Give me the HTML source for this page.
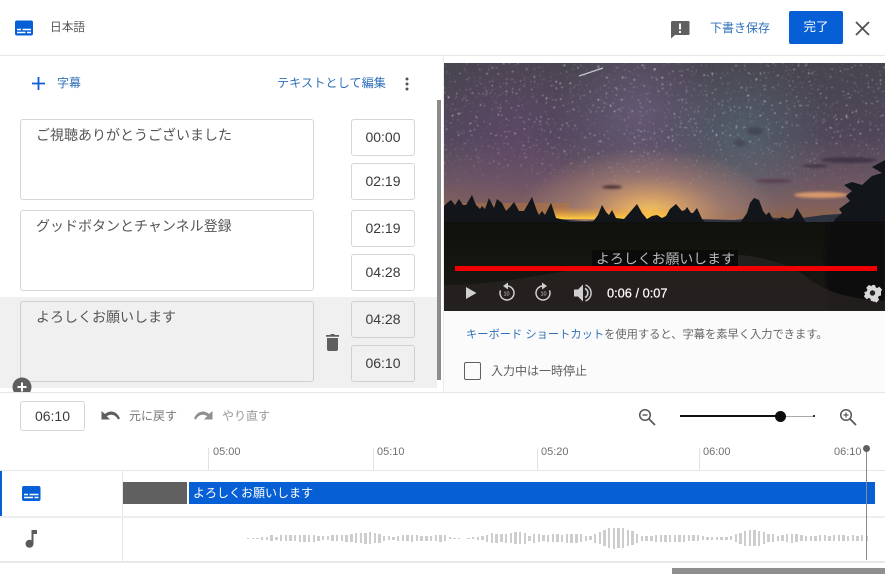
<!DOCTYPE html>
<html lang="ja"><head><meta charset="utf-8"><title>字幕</title>
<style>
*{box-sizing:border-box}
html,body{margin:0;padding:0;background:#fff}
body{width:885px;height:581px;position:relative;overflow:hidden;font-family:"Liberation Sans","Noto Sans CJK JP",sans-serif;color:#606060;filter:blur(.3px)}
.a{position:absolute}
.t{position:absolute;white-space:nowrap;line-height:16px;font-size:12px}
.blue{color:#2f70ba}
.box{position:absolute;border:1px solid #d6d6d6;border-radius:3px;background:#fff}
.sel{background:#f0f0f0;border-color:#d0d0d0}
.time{position:absolute;left:351px;width:64px;height:37px;border:1px solid #d6d6d6;border-radius:3px;background:#fff;text-align:center;font-size:14px;line-height:35px;color:#3a3a3a}
.time.sel{background:#f0f0f0;border-color:#d0d0d0}
.sub{position:absolute;left:36px;font-size:14px;line-height:20px;color:#555;white-space:nowrap}
.hl{position:absolute;height:1px;background:#e6e6e6}
svg{position:absolute;display:block}
.wave{position:absolute;left:247px;top:518px;height:40px;display:flex;align-items:center}
.wave i{display:block;width:2.4px;margin-right:2.3px;background:#cdcdcd;flex:none}
.tick{position:absolute;top:448px;width:1px;height:22px;background:#e2e2e2}
.rl{position:absolute;top:445px;font-size:11px;line-height:15px;color:#707070}
</style></head><body>

<!-- header -->
<svg style="left:14px;top:20px" width="20" height="16" viewBox="0 0 20 16"><rect x="1" y="0.500" width="18" height="15" rx="2" fill="#065fd4"/><path d="M3 9.500h4M8.500 9.500h8.500M3 12.500h8.500M13 12.500h4" stroke="#fff" stroke-width="1.500"/></svg>
<div class="t" style="left:50px;top:20px;color:#555;font-size:11.700px">日本語</div>
<div class="hl" style="left:0;top:55px;width:885px;background:#e8e8e8"></div>
<svg style="left:670px;top:20px" width="20" height="19" viewBox="0 0 20 19"><path d="M2.500 1h16a1 1 0 0 1 1 1v12a1 1 0 0 1-1 1H5l-4 3.500V2a1.500 1.500 0 0 1 1.500-1z" fill="#606060"/><path d="M10 3.500v6M10 11v2" stroke="#fff" stroke-width="2"/></svg>
<div class="t blue" style="left:710px;top:20px">下書き保存</div>
<div class="a" style="left:789px;top:11px;width:54px;height:33px;background:#065fd4;border-radius:2px;color:#fff;font-size:12.500px;line-height:33px;text-align:center">完了</div>
<svg style="left:855px;top:21px" width="15" height="15" viewBox="0 0 15 15"><path d="M1 1l13 13M14 1L1 14" stroke="#505050" stroke-width="1.800"/></svg>

<!-- left panel -->
<svg style="left:32px;top:77px" width="13" height="13" viewBox="0 0 13 13"><path d="M6.500 0v13M0 6.500h13" stroke="#065fd4" stroke-width="1.800"/></svg>
<div class="t blue" style="left:57px;top:75px">字幕</div>
<div class="t blue" style="left:277px;top:75px;font-size:12.200px">テキストとして編集</div>
<svg style="left:404px;top:77px" width="6" height="14" viewBox="0 0 6 14"><circle cx="3" cy="2" r="1.500" fill="#555"/><circle cx="3" cy="7" r="1.500" fill="#555"/><circle cx="3" cy="12" r="1.500" fill="#555"/></svg>

<div class="box" style="left:20px;top:119px;width:294px;height:81px"></div>
<div class="sub" style="top:125px">ご視聴ありがとうございました</div>
<div class="time" style="top:119px">00:00</div>
<div class="time" style="top:163px">02:19</div>

<div class="box" style="left:20px;top:210px;width:294px;height:81px"></div>
<div class="sub" style="top:216px">グッドボタンとチャンネル登録</div>
<div class="time" style="top:210px">02:19</div>
<div class="time" style="top:254px">04:28</div>

<div class="a" style="left:0;top:297px;width:437px;height:91px;background:#f0f0f0"></div>
<div class="box sel" style="left:20px;top:301px;width:294px;height:81px"></div>
<div class="sub" style="top:307px">よろしくお願いします</div>
<svg style="left:325px;top:333px" width="15" height="18" viewBox="0 0 15 18"><path d="M2 5h11v11a2 2 0 0 1-2 2H4a2 2 0 0 1-2-2zM1 2h4l1-1h3l1 1h4v1.800H1z" fill="#5f5f5f"/></svg>
<div class="time sel" style="top:301px">04:28</div>
<div class="time sel" style="top:345px">06:10</div>
<div class="a" style="left:437px;top:100px;width:4px;height:280px;background:#8c8c8c"></div>

<svg style="left:12px;top:377px" width="20" height="15" viewBox="0 0 20 15"><circle cx="10" cy="10" r="9.500" fill="#5f5f5f"/><path d="M10 5.500v9M5.500 10h9" stroke="#fff" stroke-width="2"/></svg>
<div class="hl" style="left:0;top:392px;width:885px"></div>

<!-- video -->
<svg style="left:444px;top:63px" width="441" height="248" viewBox="0 0 441 248">
<defs>
<linearGradient id="sky" x1="0" y1="0" x2="0" y2="1"><stop offset="0" stop-color="#48444f"/><stop offset=".45" stop-color="#4f4759"/><stop offset=".7" stop-color="#6a5562"/><stop offset=".86" stop-color="#80605f"/><stop offset=".96" stop-color="#8f6444"/></linearGradient>
<radialGradient id="glow" cx="205" cy="150" r="130" gradientUnits="userSpaceOnUse" gradientTransform="translate(0 75) scale(1 .5)"><stop offset="0" stop-color="#f7c860"/><stop offset=".25" stop-color="#dca468" stop-opacity=".9"/><stop offset=".6" stop-color="#b58a78" stop-opacity=".5"/><stop offset="1" stop-color="#b58a78" stop-opacity="0"/></radialGradient>
<radialGradient id="mw" cx="195" cy="50" r="85" gradientUnits="userSpaceOnUse"><stop offset="0" stop-color="#7a6a92" stop-opacity=".5"/><stop offset="1" stop-color="#7a6a92" stop-opacity="0"/></radialGradient>
<radialGradient id="teal" cx="300" cy="75" r="85" gradientUnits="userSpaceOnUse"><stop offset="0" stop-color="#547078" stop-opacity=".55"/><stop offset="1" stop-color="#547078" stop-opacity="0"/></radialGradient>
<radialGradient id="pur" cx="70" cy="70" r="90" gradientUnits="userSpaceOnUse"><stop offset="0" stop-color="#6e4878" stop-opacity=".4"/><stop offset="1" stop-color="#6e4878" stop-opacity="0"/></radialGradient>
<linearGradient id="band" x1="0" y1="0" x2="0" y2="1"><stop offset="0" stop-color="#f09a30" stop-opacity="0"/><stop offset="1" stop-color="#ffd040"/></linearGradient>
<linearGradient id="gr" x1="0" y1="0" x2="0" y2="1"><stop offset="0" stop-color="#10100c"/><stop offset=".5" stop-color="#161610"/><stop offset="1" stop-color="#1a1817"/></linearGradient>
<linearGradient id="fade" x1="0" y1="0" x2="0" y2="1"><stop offset="0" stop-color="#fff"/><stop offset=".55" stop-color="#fff"/><stop offset="1" stop-color="#000"/></linearGradient>
<mask id="starmask"><rect width="441" height="135" fill="url(#fade)"/></mask>
<filter id="stars" x="0" y="0" width="100%" height="100%"><feTurbulence type="fractalNoise" baseFrequency=".5" numOctaves="2" seed="11"/><feColorMatrix values="0 0 0 0 1  0 0 0 0 1  0 0 0 0 1  9 9 0 0 -11.700"/><feGaussianBlur stdDeviation=".4"/></filter>
<filter id="soft" x="-20%" y="-100%" width="140%" height="300%"><feGaussianBlur stdDeviation="1.200"/></filter>
</defs>
<rect width="441" height="165" fill="url(#sky)"/>
<rect width="441" height="165" fill="url(#pur)"/>
<rect width="441" height="165" fill="url(#mw)"/>
<rect width="441" height="165" fill="url(#teal)"/>
<rect width="441" height="165" fill="url(#glow)"/>
<rect x="0" y="140" width="125" height="18" fill="#c07830" opacity=".4"/>
<rect x="105" y="144" width="125" height="12" fill="url(#band)"/>
<rect width="441" height="135" filter="url(#stars)" mask="url(#starmask)" opacity=".7"/>
<path d="M135 13l24-8" stroke="#c8c4cc" stroke-width="1.200"/>
<g filter="url(#soft)">
<ellipse cx="168" cy="124" rx="10" ry="1.800" fill="#4a3038"/>
<ellipse cx="377" cy="132" rx="27" ry="3" fill="#d99a6a"/>
<ellipse cx="405" cy="97" rx="28" ry="3" fill="#3f3646"/>
<ellipse cx="371" cy="103" rx="13" ry="1.500" fill="#3f3340"/>
<ellipse cx="330" cy="118" rx="18" ry="2" fill="#5a3f50"/>
<ellipse cx="311" cy="68" rx="8" ry="4" fill="#403e50" fill-opacity=".7"/>
<ellipse cx="296" cy="80" rx="6" ry="4" fill="#403e50" fill-opacity=".6"/>
</g>
<path d="M110 162V156l30 2 40-2 40 0 30 0 40 1 30-3 30 2 30-4 30-2 30 2 20 2v10z" fill="#2c3240"/>
<g fill="#12151a">
<path d="M0 160V143L3 140 7 137 11 142 15 136 19 142 22 142 28 132 32 142 36 146 38 143 41 146 45 135 50 145 53 136 58 140 62 148 66 144 70 139 75 148 80 148 88 134 93 148 95 152 98 148 101 152 107 140 112 155 125 158 125 160z"/>
<path d="M148 160L154 152 158 142 162 149 165 152 168 147 172 155 180 156 187 148 193 141 198 150 203 156 208 153 213 152 218 155 222 153 226 146 232 141 238 148 241 147 243 144 247 150 249 150 253 145 258 156 262 160z"/>
<path d="M296 160L303 150 306 140 310 135 315 137 319 148 322 152 325 149 329 156 333 157 338 154 344 156 349 154 353 145 358 153 362 160z"/>
<path d="M441 97L428 104 438 110 428 113 418 122 408 119 400 122 408 128 402 133 406 138 395 146 398 150 391 156 388 165H441z"/>
</g>
<rect y="159" width="441" height="89" fill="url(#gr)"/>
<path d="M441 160H385L380 190 385 248H441z" fill="#0f1110" filter="url(#soft)"/>
<path d="M0 222C60 222 100 210 145 205 190 198 230 196 260 192 300 188 340 198 360 212 375 225 395 235 441 238V248H0z" fill="#2b2523" opacity=".7"/>
<rect x="148" y="187" width="146" height="18" fill="#0b0b0b"/>
<text x="152" y="200.500" font-size="13.900" fill="#b8b8b8" style="font-family:'Liberation Sans','Noto Sans CJK JP',sans-serif">よろしくお願いします</text>
<rect x="11" y="203" width="422" height="5" fill="#f00000"/>
<!-- controls -->
<path d="M22 224l10.500 6-10.500 6z" fill="#cfcfcf"/>
<g fill="none" stroke="#cfcfcf" stroke-width="1.500"><path d="M63 223a7 7 0 1 1-6.500 4.400"/><path d="M99 223a7 7 0 1 0 6.500 4.400"/></g>
<path d="M64 219.500v7l-5-3.500zM98 219.500v7l5-3.500z" fill="#cfcfcf"/>
<text x="62.500" y="232.500" font-size="5.500" fill="#cfcfcf" text-anchor="middle" style="font-family:'Liberation Sans',sans-serif">10</text>
<text x="99.500" y="232.500" font-size="5.500" fill="#cfcfcf" text-anchor="middle" style="font-family:'Liberation Sans',sans-serif">10</text>
<path d="M130 226.500h4l5-5v17l-5-5h-4z" fill="#cfcfcf"/>
<path d="M141 225.500a5 5 0 0 1 0 9" stroke="#cfcfcf" stroke-width="1.600" fill="none"/><path d="M141.500 222a8.500 8.500 0 0 1 0 16" stroke="#cfcfcf" stroke-width="1.400" fill="none"/>
<text x="163" y="234.300" font-size="12.800" fill="#fff" stroke="#fff" stroke-width=".2" style="font-family:'Liberation Sans',sans-serif">0:06 / 0:07</text>
<g transform="translate(429 230)"><path d="M-2-8h4l.6 2.300 1.600.7 2.100-1.200 2.800 2.800-1.200 2.100.7 1.600L8-1v3.500l-2.300.6-.7 1.600 1.200 2.100-2.800 2.800-2.100-1.200-1.600.7L0 8H-2l-.6-2.300-1.600-.7-2.100 1.200-2.800-2.800 1.200-2.100-.7-1.600L-8.600 1V-1l2.300-.6.7-1.600-1.200-2.100 2.800-2.800 2.100 1.200 1.600-.7z" fill="#d8d8d8"/><circle cx="-.5" cy="0" r="2.700" fill="#262220"/></g>
</svg>

<!-- right under video -->
<div class="a" style="left:443px;top:311px;width:442px;height:81px;background:#fbfbfb"></div>
<div class="a" style="left:443px;top:56px;width:1px;height:336px;background:#ececec"></div>
<div class="t" style="left:466px;top:327px;font-size:11.250px;color:#666"><span class="blue">キーボード ショートカット</span>を使用すると、字幕を素早く入力できます。</div>
<div class="a" style="left:464px;top:362px;width:17px;height:18px;border:1.500px solid #606060;border-radius:2px"></div>
<div class="t" style="left:491px;top:363px;color:#606060">入力中は一時停止</div>

<!-- toolbar -->
<div class="box" style="left:20px;top:401px;width:65px;height:30px;text-align:center;font-size:14px;line-height:28px;color:#3a3a3a">06:10</div>
<svg style="left:100px;top:409px" width="21" height="14" viewBox="0 0 21 14"><path d="M1.500 2v8.500H10L6.800 7.300C10.500 4.500 15.500 5.500 18 10.500l2-1C17 2 10 .5 5 5z" fill="#5f5f5f"/></svg>
<div class="t" style="left:129px;top:408px;color:#777">元に戻す</div>
<svg style="left:193px;top:409px" width="21" height="14" viewBox="0 0 21 14"><path d="M19.500 2v8.500H11l3.200-3.200C10.500 4.500 5.500 5.500 3 10.500l-2-1C4 2 11 .5 16 5z" fill="#8f8f8f"/></svg>
<div class="t" style="left:222px;top:408px;color:#9a9a9a">やり直す</div>

<svg style="left:638px;top:408px" width="18" height="18" viewBox="0 0 18 18"><circle cx="7" cy="7" r="5.300" fill="none" stroke="#555" stroke-width="1.500"/><path d="M11 11l6 6" stroke="#555" stroke-width="1.700"/><path d="M4.500 7h5" stroke="#555" stroke-width="1.400"/></svg>
<div class="a" style="left:680px;top:415px;width:101px;height:2px;background:#111"></div>
<div class="a" style="left:781px;top:416px;width:33px;height:1px;background:#aaa"></div>
<div class="a" style="left:813px;top:415px;width:2px;height:2px;background:#333"></div>
<div class="a" style="left:775px;top:410.500px;width:11px;height:11px;border-radius:50%;background:#0d0d0d"></div>
<svg style="left:839px;top:408px" width="18" height="18" viewBox="0 0 18 18"><circle cx="7" cy="7" r="5.300" fill="none" stroke="#555" stroke-width="1.500"/><path d="M11 11l6 6" stroke="#555" stroke-width="1.700"/><path d="M4.500 7h5M7 4.500v5" stroke="#555" stroke-width="1.200"/></svg>

<!-- ruler -->
<div class="tick" style="left:208px"></div><div class="rl" style="left:213px">05:00</div>
<div class="tick" style="left:373px"></div><div class="rl" style="left:377px">05:10</div>
<div class="tick" style="left:537px"></div><div class="rl" style="left:541px">05:20</div>
<div class="tick" style="left:699px"></div><div class="rl" style="left:703px">06:00</div>
<div class="rl" style="left:834px">06:10</div>
<div class="hl" style="left:0;top:470px;width:885px"></div>

<!-- tracks -->
<div class="a" style="left:0;top:471px;width:2px;height:45px;background:#065fd4"></div>
<div class="a" style="left:122px;top:471px;width:1px;height:90px;background:#e6e6e6"></div>
<svg style="left:22px;top:486px" width="19" height="15" viewBox="0 0 19 15"><rect width="18.500" height="15" rx="2" fill="#065fd4"/><path d="M2 8.500h4M7.500 8.500h9M2 11.500h9M12.500 11.500h4" stroke="#fff" stroke-width="1.400"/></svg>
<div class="a" style="left:123px;top:482px;width:64px;height:22px;background:#606060"></div>
<div class="a" style="left:189px;top:482px;width:686px;height:22px;background:#065fd4;color:#fff;font-size:12px;line-height:22px;padding-left:4px;white-space:nowrap">よろしくお願いします</div>
<div class="hl" style="left:0;top:516px;width:885px;height:2px;background:#eee"></div>
<svg style="left:25px;top:530px" width="13" height="18" viewBox="0 0 13 18"><path d="M6.500 0H12v4H8.500v10h-2z" fill="#5a5a5a"/><circle cx="4.500" cy="13.800" r="4" fill="#5a5a5a"/></svg>
<div class="wave"><i style="height:1px"></i><i style="height:1px"></i><i style="height:1px"></i><i style="height:3px"></i><i style="height:3px"></i><i style="height:6px"></i><i style="height:3px"></i><i style="height:6px"></i><i style="height:6px"></i><i style="height:6px"></i><i style="height:6px"></i><i style="height:7px"></i><i style="height:7px"></i><i style="height:7px"></i><i style="height:7px"></i><i style="height:5px"></i><i style="height:4px"></i><i style="height:4px"></i><i style="height:6px"></i><i style="height:6px"></i><i style="height:6px"></i><i style="height:7px"></i><i style="height:8px"></i><i style="height:10px"></i><i style="height:10px"></i><i style="height:11px"></i><i style="height:12px"></i><i style="height:10px"></i><i style="height:9px"></i><i style="height:5px"></i><i style="height:4px"></i><i style="height:3px"></i><i style="height:5px"></i><i style="height:6px"></i><i style="height:6px"></i><i style="height:7px"></i><i style="height:6px"></i><i style="height:5px"></i><i style="height:5px"></i><i style="height:5px"></i><i style="height:6px"></i><i style="height:7px"></i><i style="height:6px"></i><i style="height:2px"></i><i style="height:1px"></i><i style="height:1px"></i><i style="height:0"></i><i style="height:1px"></i><i style="height:2px"></i><i style="height:3px"></i><i style="height:4px"></i><i style="height:7px"></i><i style="height:10px"></i><i style="height:9px"></i><i style="height:8px"></i><i style="height:9px"></i><i style="height:10px"></i><i style="height:12px"></i><i style="height:12px"></i><i style="height:11px"></i><i style="height:5px"></i><i style="height:9px"></i><i style="height:8px"></i><i style="height:6px"></i><i style="height:7px"></i><i style="height:8px"></i><i style="height:8px"></i><i style="height:7px"></i><i style="height:9px"></i><i style="height:9px"></i><i style="height:9px"></i><i style="height:8px"></i><i style="height:5px"></i><i style="height:4px"></i><i style="height:9px"></i><i style="height:12px"></i><i style="height:16px"></i><i style="height:20px"></i><i style="height:21px"></i><i style="height:20px"></i><i style="height:20px"></i><i style="height:16px"></i><i style="height:14px"></i><i style="height:9px"></i><i style="height:5px"></i><i style="height:5px"></i><i style="height:5px"></i><i style="height:7px"></i><i style="height:7px"></i><i style="height:7px"></i><i style="height:7px"></i><i style="height:7px"></i><i style="height:7px"></i><i style="height:7px"></i><i style="height:6px"></i><i style="height:6px"></i><i style="height:6px"></i><i style="height:4px"></i><i style="height:3px"></i><i style="height:3px"></i><i style="height:3px"></i><i style="height:3px"></i><i style="height:3px"></i><i style="height:4px"></i><i style="height:8px"></i><i style="height:11px"></i><i style="height:15px"></i><i style="height:16px"></i><i style="height:16px"></i><i style="height:15px"></i><i style="height:12px"></i><i style="height:8px"></i><i style="height:8px"></i><i style="height:5px"></i><i style="height:6px"></i><i style="height:8px"></i><i style="height:9px"></i><i style="height:8px"></i><i style="height:6px"></i><i style="height:5px"></i><i style="height:5px"></i><i style="height:5px"></i><i style="height:6px"></i><i style="height:6px"></i><i style="height:5px"></i><i style="height:6px"></i><i style="height:6px"></i><i style="height:6px"></i><i style="height:5px"></i><i style="height:6px"></i><i style="height:5px"></i><i style="height:6px"></i><i style="height:5px"></i></div>
<div class="hl" style="left:0;top:561px;width:885px;height:2px;background:#e8e8e8"></div>
<div class="a" style="left:866px;top:449px;width:1px;height:111px;background:#8a8a8a"></div>
<div class="a" style="left:862.500px;top:445px;width:7px;height:7px;border-radius:50%;background:#606060"></div>
<div class="a" style="left:672px;top:568px;width:213px;height:6px;background:#8f8f8f"></div>
</body></html>
